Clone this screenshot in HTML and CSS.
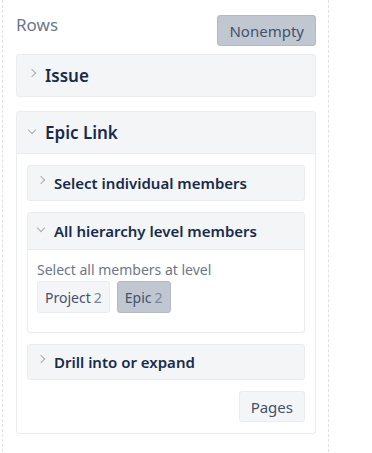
FILE: index.html
```html
<!DOCTYPE html>
<html lang="en">
<head>
  <meta charset="UTF-8" />
  <title>Rows</title>
  <link rel="stylesheet" href="styles.css">
</head>
<body>

  <div class="panel">
    <div class="panel-head">
      <span class="panel-title">Rows</span>
      <button class="btn btn-dark">Nonempty</button>
    </div>

    <div class="section">
      <div class="section-head">
        <span class="chev chev-right"></span>
        <span>Issue</span>
      </div>
    </div>

    <div class="section open">
      <div class="section-head">
        <span class="chev chev-down"></span>
        <span>Epic Link</span>
      </div>
      <div class="section-body">

        <div class="sub">
          <div class="sub-head">
            <span class="chev chev-right"></span>
            <span>Select individual members</span>
          </div>
        </div>

        <div class="sub open">
          <div class="sub-head">
            <span class="chev chev-down"></span>
            <span>All hierarchy level members</span>
          </div>
          <div class="sub-body">
            <div class="hint">Select all members at level</div>
            <div class="chips">
              <button class="btn chip">Project<span class="count">2</span></button>
              <button class="btn btn-dark chip">Epic<span class="count">2</span></button>
            </div>
          </div>
        </div>

        <div class="sub">
          <div class="sub-head">
            <span class="chev chev-right"></span>
            <span>Drill into or expand</span>
          </div>
        </div>

        <div class="actions">
          <button class="btn">Pages</button>
        </div>
      </div>
    </div>
  </div>

</body>
</html>
```

FILE: styles.css
```css
body {
  margin: 0;
  font-family: "Noto Sans", "Open Sans", sans-serif;
  background: #fff;
  color: #172b4d;
}
.panel {
  width: 300px;
  margin-left: 2px;
  padding: 0 12px 13px 13px;
  border: 1px dashed #dfe1e6;
  border-top: none;
}
.panel-head {
  display: flex;
  justify-content: space-between;
  align-items: flex-start;
  padding-top: 15px;
  margin-bottom: 8px;
}
.panel-title {
  font-size: 17px;
  color: #6b778c;
  line-height: 20px;
}
.btn {
  font-family: inherit;
  font-size: 15px;
  color: #42526e;
  background: #f4f5f7;
  border: 1px solid #ebecf0;
  border-radius: 3px;
  padding: 0 11px;
  height: 31px;
  cursor: pointer;
}
.btn-dark {
  background: #c1c7d0;
  border-color: #b3bac5;
}
.section {
  border: 1px solid #ebecf0;
  border-radius: 3px;
  background: #f4f5f7;
  margin-bottom: 14px;
}
.section-head {
  display: flex;
  align-items: center;
  height: 41px;
  padding-left: 12px;
  font-size: 17px;
  font-weight: 600;
}
.section.open .section-head {
  border-bottom: 1px solid #ebecf0;
}
.section-body {
  background: #fff;
  padding: 11px 10px 11px;
  border-radius: 0 0 3px 3px;
}
.sub {
  border: 1px solid #ebecf0;
  border-radius: 3px;
  background: #f4f5f7;
  margin-bottom: 11px;
}
.sub-head {
  display: flex;
  align-items: center;
  height: 34px;
  padding-left: 10px;
  font-size: 15px;
  font-weight: 600;
}
.sub.open .sub-head {
  height: 36px;
  border-bottom: 1px solid #ebecf0;
}
.sub-body {
  background: #fff;
  padding: 10px 9px 19px;
  border-radius: 0 0 3px 3px;
}
.hint {
  font-size: 14px;
  color: #6b778c;
  line-height: 20px;
}
.chips {
  display: flex;
  gap: 7px;
  margin-top: 1px;
}
.chip {
  font-size: 14px;
  height: 32px;
  padding: 0 7px;
}
.count {
  color: #7a869a;
  margin-left: 3px;
}
.actions {
  display: flex;
  justify-content: flex-end;
}
.chev {
  width: 5px;
  height: 5px;
  border-right: 1px solid #a5adba;
  border-bottom: 1px solid #a5adba;
  margin-right: 10px;
  flex-shrink: 0;
}
.chev-right {
  transform: rotate(-45deg);
  margin-top: -6px;
}
.chev-down {
  transform: rotate(45deg);
  margin-top: -6px;
}
```
